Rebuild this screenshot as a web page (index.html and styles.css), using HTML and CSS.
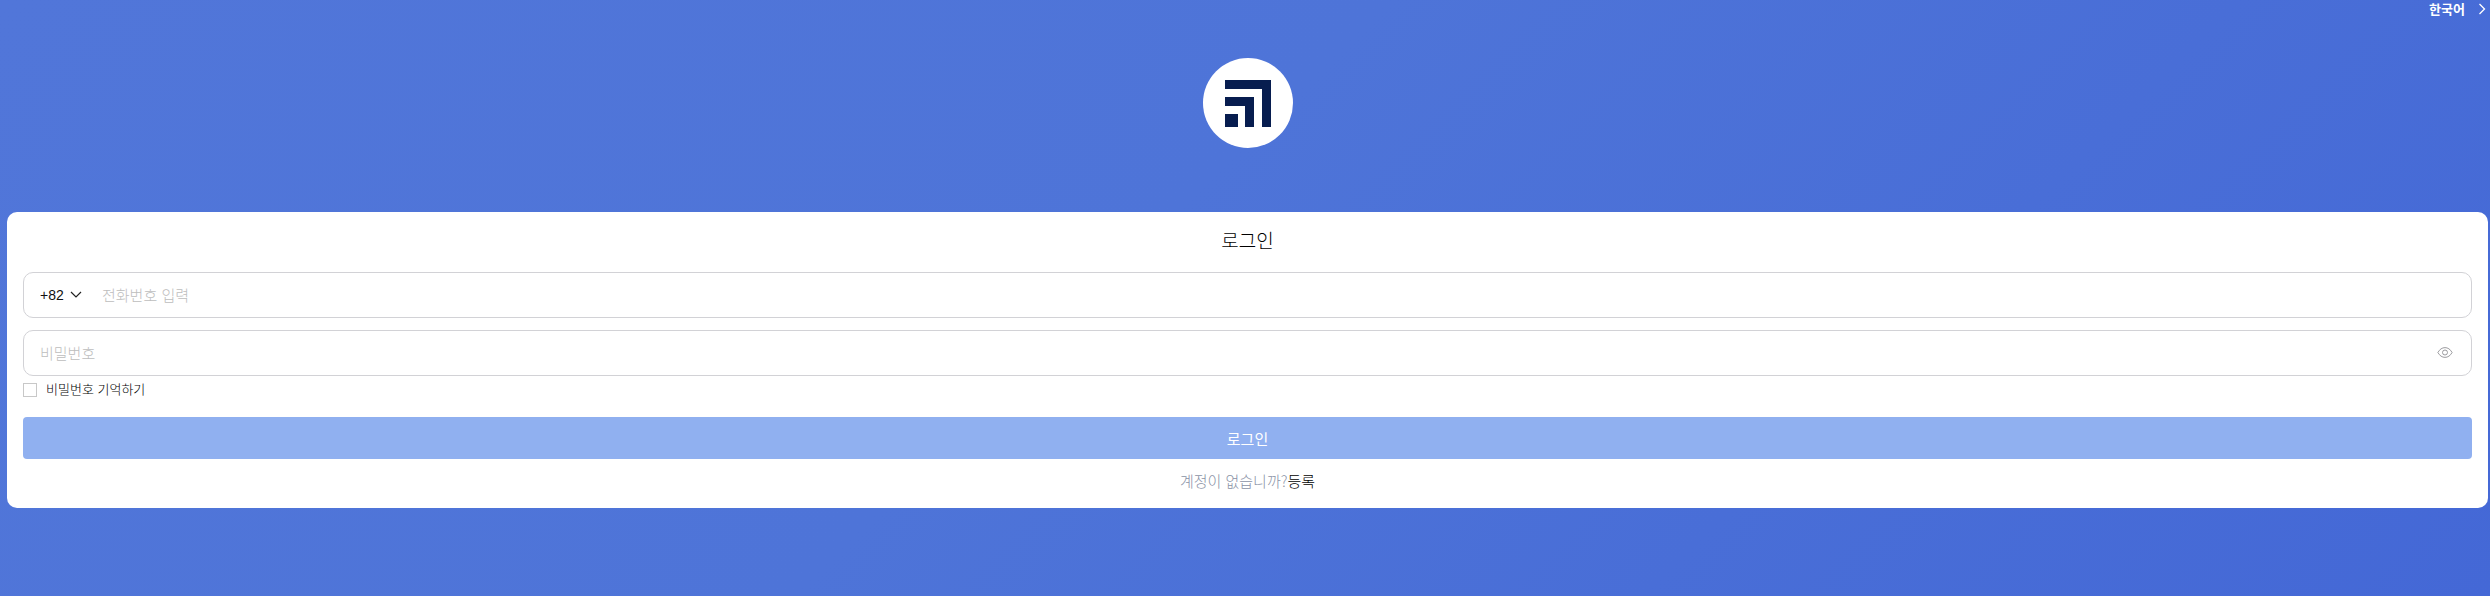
FILE: index.html
```html
<!DOCTYPE html>
<html lang="ko">
  <head>
    <meta charset="utf-8">
    <meta name="viewport" content="width=device-width,initial-scale=1">
    <title>로그인</title>
    <link rel="stylesheet" href="styles.css">
  </head>

  <body>
    <div class="lang_bar">
      <span>한국어</span>
      <svg class="lang_arrow" viewBox="0 0 8 12"><path d="M1.5 1L6.5 6L1.5 11" /></svg>
    </div>

    <div class="logo_wrap">
      <div class="logo">
        <svg viewBox="0 0 46 47" width="46" height="47">
          <path d="M0 0H46V47H37V9H0Z" />
          <path d="M0 17H29V47H20V26H0Z" />
          <rect x="0" y="34" width="13" height="13" />
        </svg>
      </div>
    </div>

    <div class="card">
      <h1 class="card_title">로그인</h1>

      <div class="field">
        <div class="country">
          <span>+82</span>
          <svg class="country_arrow" viewBox="0 0 12 7"><path d="M1 1L6 6L11 1" /></svg>
        </div>
        <input class="field_input" type="text" placeholder="전화번호 입력">
      </div>

      <div class="field field_pass">
        <input class="field_input" type="password" placeholder="비밀번호">
        <svg class="eye" viewBox="0 0 18 14">
          <path d="M1 7C3 3.4 5.8 1.5 9 1.5S15 3.4 17 7C15 10.6 12.2 12.5 9 12.5S3 10.6 1 7Z" />
          <circle cx="9" cy="7" r="2.8" />
        </svg>
      </div>

      <label class="remember">
        <span class="remember_box"></span>
        <span class="remember_text">비밀번호 기억하기</span>
      </label>

      <button class="submit" type="button">로그인</button>

      <p class="signup">계정이 없습니까?<a href="#">등록</a></p>
    </div>
  </body>
</html>
```

FILE: styles.css
```css
* {
    box-sizing: border-box;
}
html, body {
    height: 100%;
}
body {
    margin: 0;
    padding-left: 7px;
    padding-right: 2px;
    overflow: hidden;
    font-family: 'Noto Sans CJK KR', 'Liberation Sans', sans-serif;
    font-weight: 300;
    background: linear-gradient(135deg, #5176d9 0%, #4e74d8 45%, #4468d6 100%);
}

/* top right language switch */
.lang_bar {
    display: flex;
    justify-content: flex-end;
    align-items: center;
    gap: 13px;
    height: 17px;
    padding-right: 2px;
    color: #fff;
    font-size: 13px;
    font-weight: 700;
    line-height: 16px;
}
.lang_arrow {
    width: 8px;
    height: 12px;
}
.lang_arrow path {
    fill: none;
    stroke: #fff;
    stroke-width: 1.3;
}

.logo_wrap {
    display: flex;
    justify-content: center;
    padding-top: 41px;
    padding-bottom: 64px;
}
.logo {
    display: flex;
    align-items: center;
    justify-content: center;
    width: 90px;
    height: 90px;
    border-radius: 50%;
    background: #fff;
}
.logo svg {
    fill: #071d4f;
}

.card {
    height: 296px;
    padding: 0 16px;
    background: #fff;
    border-radius: 10px;
}
.card_title {
    margin: 0;
    height: 60px;
    font-size: 19px;
    font-weight: 300;
    line-height: 56px;
    text-align: center;
    color: #000;
}

.field {
    display: flex;
    align-items: center;
    height: 46px;
    margin-bottom: 12px;
    padding: 0 18px 1px 16px;
    border: 1px solid #d2d2d6;
    border-radius: 10px;
}
.field_input {
    flex: 1;
    min-width: 0;
    border: 0;
    outline: 0;
    padding: 0;
    font-family: inherit;
    font-size: 15px;
    font-weight: 300;
    background: transparent;
}
.field_input::placeholder {
    color: #bdbdbd;
}

.country {
    display: flex;
    align-items: center;
    gap: 6px;
    width: 62px;
    font-family: 'Liberation Sans', sans-serif;
    font-weight: 400;
    font-size: 14px;
    color: #111;
}
.country_arrow {
    width: 12px;
    height: 7px;
}
.country_arrow path {
    fill: none;
    stroke: #222;
    stroke-width: 1.2;
}

.eye {
    width: 16px;
    height: 13px;
}
.eye path, .eye circle {
    fill: none;
    stroke: #8f8f94;
    stroke-width: 1;
}

.remember {
    display: flex;
    align-items: center;
    gap: 9px;
    margin-top: -5px;
    height: 14px;
    font-size: 13px;
    color: #000;
}
.remember_box {
    width: 14px;
    height: 14px;
    border: 1px solid #c8c8c8;
}
.remember_text {
    padding-bottom: 3px;
}

.submit {
    display: block;
    width: 100%;
    height: 42px;
    margin-top: 20px;
    border: 0;
    border-radius: 4px;
    background: #90b0f0;
    color: #fff;
    font-family: inherit;
    font-weight: 400;
    font-size: 15px;
}

.signup {
    margin: 12px 0 0;
    font-size: 15px;
    line-height: 20px;
    text-align: center;
    color: #8a92a6;
}
.signup a {
    color: #000;
    text-decoration: none;
}
```
